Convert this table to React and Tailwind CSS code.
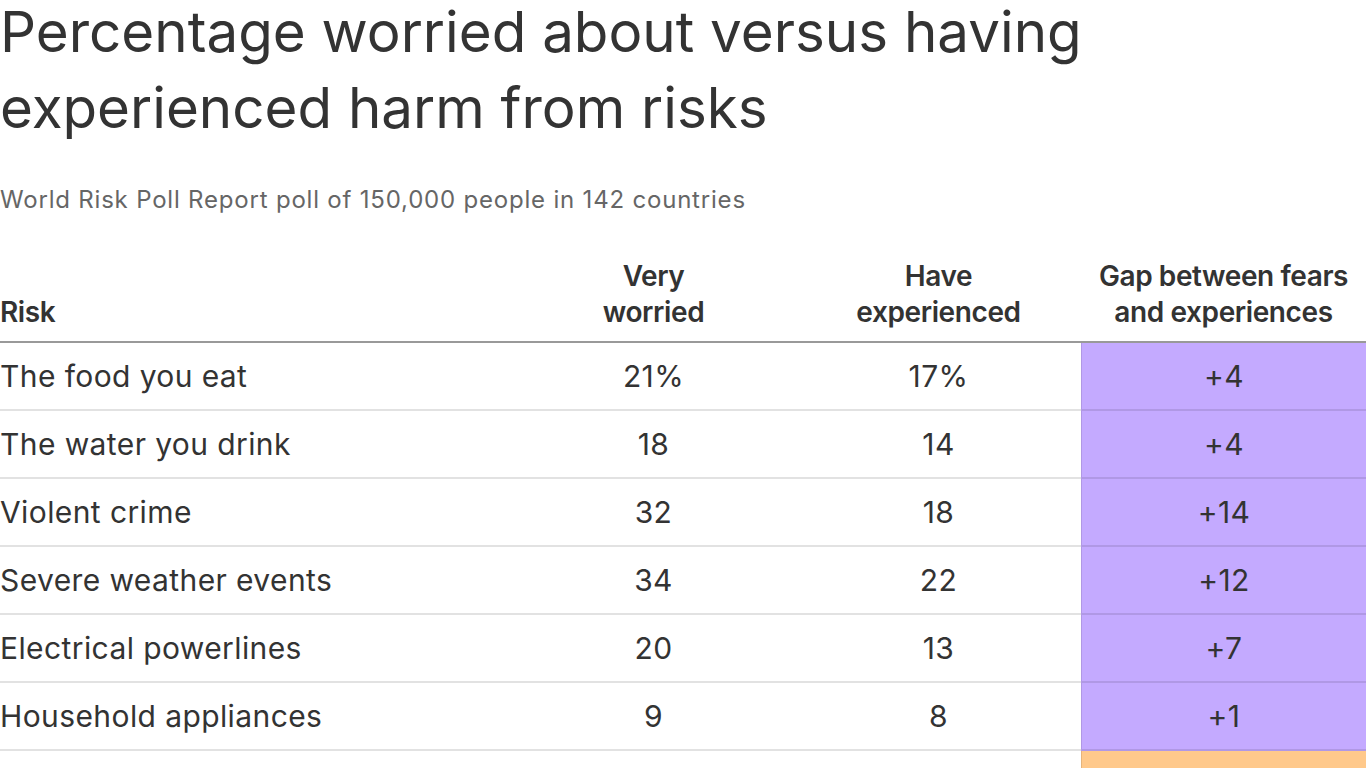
import React from 'react';

const rows = [
  { risk: 'The food you eat', worried: '21%', exp: '17%', gap: '+4', tone: 'purple' },
  { risk: 'The water you drink', worried: '18', exp: '14', gap: '+4', tone: 'purple' },
  { risk: 'Violent crime', worried: '32', exp: '18', gap: '+14', tone: 'purple' },
  { risk: 'Severe weather events', worried: '34', exp: '22', gap: '+12', tone: 'purple' },
  { risk: 'Electrical powerlines', worried: '20', exp: '13', gap: '+7', tone: 'purple' },
  { risk: 'Household appliances', worried: '9', exp: '8', gap: '+1', tone: 'purple' },
  { risk: 'Your workplace', worried: '12', exp: '14', gap: '-2', tone: 'orange' },
];

const App = () => {
  return (
    <div
      className="h-screen w-full overflow-hidden bg-white text-[#333]"
      style={{ fontFamily: 'Inter, "Noto Sans", sans-serif' }}
    >
      {/* Title */}
      <h1 className="text-[56.5px] leading-[76px] tracking-[0px] font-normal -mt-[6px]">
        Percentage worried about versus having
        <br />
        experienced harm from risks
      </h1>
      <p className="mt-[39px] text-[24px] leading-[30px] tracking-[0.8px] text-[#666]">
        World Risk Poll Report poll of 150,000 people in 142 countries
      </p>

      {/* Table */}
      <div className="mt-[43px]">
        <div className="grid grid-cols-[511px_285px_285px_285px] border-b-2 border-[#999] font-semibold text-[28px] leading-[36px] tracking-[-0.4px] pb-[11px]">
          <div className="self-end">Risk</div>
          <div className="text-center">Very<br />worried</div>
          <div className="text-center">Have<br />experienced</div>
          <div className="text-center">Gap between fears<br />and experiences</div>
        </div>
        {rows.map((r) => (
          <div
            key={r.risk}
            className="grid grid-cols-[511px_285px_285px_285px] h-[68px] text-[30px] tracking-[0.4px]"
          >
            <div className="flex items-center pt-[1px] border-b-2 border-[#e2e2e2]">{r.risk}</div>
            <div className="flex items-center justify-center pt-[1px] border-b-2 border-[#e2e2e2]">{r.worried}</div>
            <div className="flex items-center justify-center pt-[1px] border-b-2 border-[#e2e2e2]">{r.exp}</div>
            <div
              className={`flex items-center justify-center pt-[1px] border-b-2 border-l border-black/10 ${
                r.tone === 'purple' ? 'bg-[#c4aaff]' : 'bg-[#ffc98b]'
              }`}
            >
              {r.gap}
            </div>
          </div>
        ))}
      </div>
    </div>
  );
};

export default App;
